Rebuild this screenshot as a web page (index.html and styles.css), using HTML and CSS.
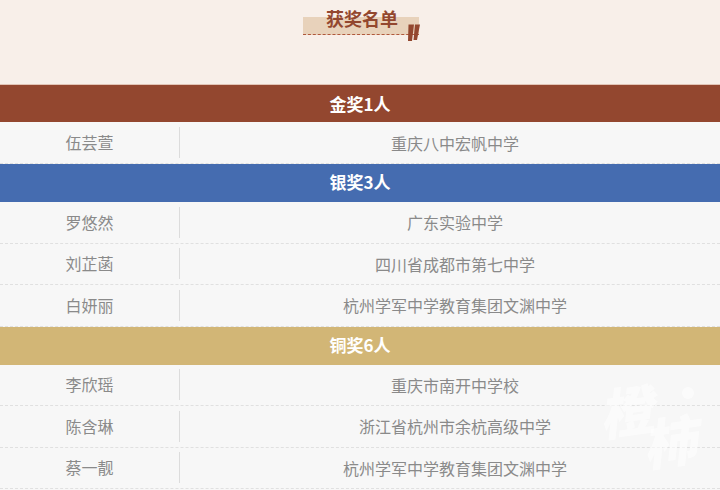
FILE: index.html
```html
<!DOCTYPE html>
<html lang="zh-CN">
<head>
<meta charset="utf-8">
<title>获奖名单</title>
<link rel="stylesheet" href="styles.css">
</head>
<body>
<div class="page">
  <header class="hero">
    <div class="title">
      <span class="title-bg"></span>
      <h1>获奖名单</h1>
      <svg class="quote" width="13" height="18" viewBox="0 0 13 18"><path d="M1.500 0.500H7L5 17H1zM8 0.500H13L10 16H6.500z" fill="#93472f"/></svg>
    </div>
  </header>
  <h2 class="band gold">金奖1人</h2>
  <div class="row first"><div class="name">伍芸萱</div><div class="school">重庆八中宏帆中学</div></div>
  <h2 class="band blue">银奖3人</h2>
  <div class="row"><div class="name">罗悠然</div><div class="school">广东实验中学</div></div>
  <div class="row"><div class="name">刘芷菡</div><div class="school">四川省成都市第七中学</div></div>
  <div class="row"><div class="name">白妍丽</div><div class="school">杭州学军中学教育集团文渊中学</div></div>
  <h2 class="band bronze">铜奖6人</h2>
  <div class="row"><div class="name">李欣瑶</div><div class="school">重庆市南开中学校</div></div>
  <div class="row"><div class="name">陈含琳</div><div class="school">浙江省杭州市余杭高级中学</div></div>
  <div class="row"><div class="name">蔡一靓</div><div class="school">杭州学军中学教育集团文渊中学</div></div>
  <div class="mark" aria-hidden="true"><span class="mark-a">橙</span><span class="mark-b">柿</span><span class="mark-dot"></span></div>
</div>
</body>
</html>
```

FILE: styles.css
```css
* { box-sizing: border-box; margin: 0; padding: 0; }
html, body { background: #f7f7f7; }
.page {
  position: relative;
  width: 720px;
  height: 490px;
  overflow: hidden;
  font-family: "Noto Sans CJK SC", "Noto Sans", sans-serif;
}
.hero {
  height: 85px;
  background: #f8efe9;
  border-bottom: 1px solid #e2c4b6;
  display: flex;
  justify-content: center;
}
.title {
  position: relative;
  width: 116px;
  height: 35px;
  margin-left: 2px;
}
.title h1 {
  position: relative;
  text-align: center;
  font-size: 18px;
  line-height: 24px;
  margin-top: 6px;
  margin-left: 4px;
  margin-right: 2px;
  color: #93472f;
  font-weight: 700;
}
.title-bg {
  position: absolute;
  left: 0;
  right: 0;
  top: 17px;
  height: 18px;
  background: #e8d2bb;
  border-bottom: 1px dashed #b0583c;
}
.quote { position: absolute; left: 104px; top: 24px; }
.band {
  height: 38px;
  line-height: 36px;
  text-align: center;
  color: #fff;
  font-size: 17px;
  font-weight: 700;
}
.gold { background: #93472f; height: 37px; line-height: 37px; }
.blue { background: #456cb0; }
.bronze { background: #d2b676; }
.row {
  height: 41.500px;
  display: flex;
  align-items: center;
  color: #8a8a8a;
  font-size: 16px;
  border-bottom: 1px dashed #e0e0e0;
}
.row.first { height: 42px; }
.name {
  width: 180px;
  height: 31px;
  line-height: 31px;
  text-align: center;
  border-right: 1px solid #dcdcdc;
}
.school { flex: 1; text-align: center; padding-left: 10px; }
.mark {
  position: absolute;
  left: 600px;
  top: 380px;
  width: 120px;
  height: 95px;
  color: rgba(255, 255, 255, 0.55);
  font-weight: 900;
  font-size: 54px;
  line-height: 54px;
}
.mark-a { position: absolute; left: 4px; top: 2px; transform: rotate(-8deg) skewX(-14deg); }
.mark-b { position: absolute; left: 48px; top: 32px; transform: rotate(-8deg) skewX(-14deg); }
.mark-dot {
  position: absolute;
  left: 82px;
  top: 7px;
  width: 12px;
  height: 12px;
  border-radius: 50%;
  background: rgba(255, 255, 255, 0.55);
}
```
